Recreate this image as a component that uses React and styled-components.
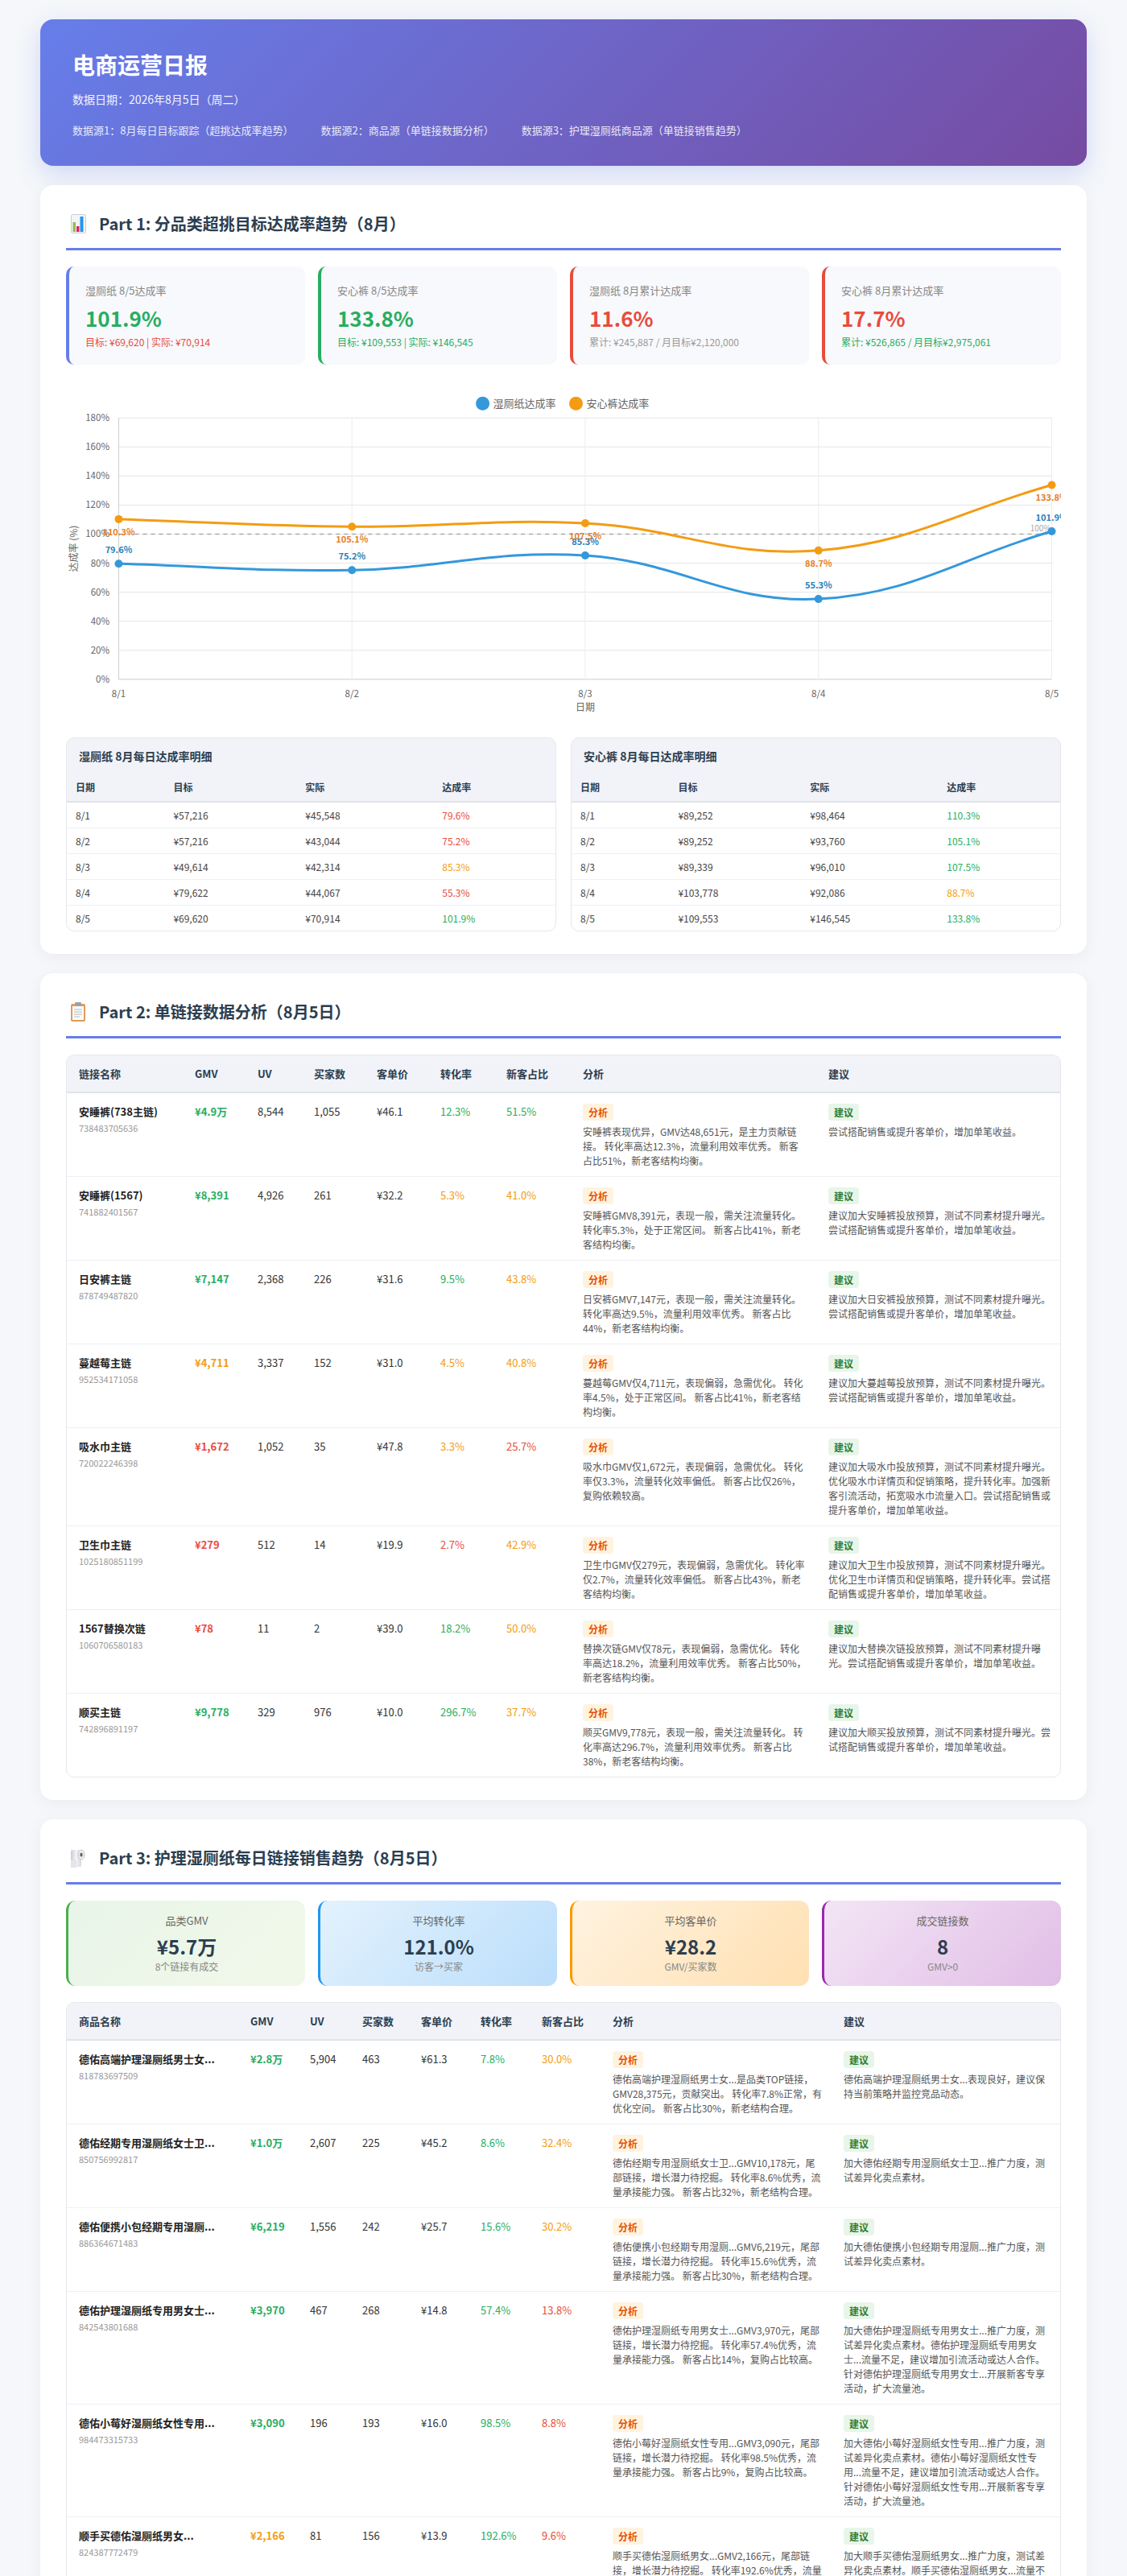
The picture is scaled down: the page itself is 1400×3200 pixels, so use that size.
import React from 'react';
import styled, { createGlobalStyle } from 'styled-components';

const GREEN = '#27ae60';
const ORANGE = '#f39c12';
const RED = '#e74c3c';
const tone = { g: GREEN, o: ORANGE, r: RED };

const GlobalStyle = createGlobalStyle`
  * { box-sizing: border-box; }
  body {
    margin: 0;
    background: #f5f7fa;
    color: #333;
    font-family: "Noto Sans CJK SC", "Noto Sans", sans-serif;
  }
`;

const Page = styled.div`
  max-width: 1300px;
  margin: 0 auto;
  padding: 24px 0 40px;
  display: flex;
  flex-direction: column;
  gap: 24px;
`;

const Header = styled.header`
  background: linear-gradient(135deg, #667eea 0%, #764ba2 100%);
  border-radius: 16px;
  padding: 36px 40px 34px;
  color: #fff;
  box-shadow: 0 10px 30px rgba(102, 126, 234, 0.25);
`;

const HeaderTitle = styled.h1`
  margin: 0;
  font-size: 28px;
  line-height: 40px;
  font-weight: 700;
`;

const HeaderDate = styled.div`
  margin-top: 12px;
  font-size: 14px;
  line-height: 22px;
  opacity: 0.92;
`;

const Sources = styled.div`
  margin-top: 18px;
  display: flex;
  gap: 34px;
  font-size: 13px;
  line-height: 20px;
  opacity: 0.85;
`;

const Section = styled.section`
  background: #fff;
  border-radius: 16px;
  padding: 32px 32px 28px;
  box-shadow: 0 4px 20px rgba(0, 0, 0, 0.05);
`;

const SectionTitle = styled.h2`
  margin: 0 0 20px;
  display: flex;
  align-items: center;
  font-size: 20px;
  line-height: 32px;
  font-weight: 700;
  color: #2c3e50;
  padding-bottom: 14px;
  border-bottom: 3px solid #667eea;

  svg {
    flex: none;
    margin-right: 15px;
  }
`;

/* ---------- part 1 ---------- */

const StatGrid = styled.div`
  display: grid;
  grid-template-columns: repeat(4, 1fr);
  gap: 16px;
`;

const StatCard = styled.div`
  background: #f8f9fc;
  border-left: 4px solid ${(p) => p.$accent};
  border-radius: 10px;
  padding: 20px;
`;

const StatLabel = styled.div`
  font-size: 13px;
  line-height: 20px;
  color: #888;
`;

const StatValue = styled.div`
  margin-top: 8px;
  font-size: 26px;
  line-height: 32px;
  font-weight: 700;
  color: ${(p) => p.$color};
`;

const StatSub = styled.div`
  margin-top: 6px;
  font-size: 12px;
  line-height: 16px;
  color: ${(p) => p.$color};
`;

const ChartBox = styled.div`
  margin-top: 29px;
  height: 405px;

  svg {
    display: block;
    width: 100%;
    height: 100%;
    font-family: "Noto Sans CJK SC", "Noto Sans", sans-serif;
  }
`;

const DetailGrid = styled.div`
  margin-top: 29px;
  display: grid;
  grid-template-columns: 1fr 1fr;
  gap: 18px;
`;

const DetailCard = styled.div`
  background: #f1f3f8;
  border: 1px solid #e6e8ee;
  border-radius: 10px;
  overflow: hidden;
`;

const DetailTitle = styled.div`
  padding: 14px 15px;
  font-size: 14px;
  line-height: 16px;
  font-weight: 700;
  color: #2c3e50;
`;

const Table = styled.table`
  width: 100%;
  border-collapse: collapse;
  table-layout: fixed;
`;

const Col = styled.col`
  width: ${(p) => p.$w};
`;

const DTh = styled.th`
  text-align: left;
  padding: 9px 11px;
  font-size: 12px;
  line-height: 16px;
  font-weight: 700;
  color: #2c3e50;
  border-bottom: 2px solid #e0e3ea;
`;

const DTd = styled.td`
  background: #fff;
  padding: 8px 11px;
  font-size: 12px;
  line-height: 15px;
  color: ${(p) => p.$color || '#444'};
  border-bottom: 1px solid #eef0f4;

  tr:last-child > & {
    border-bottom: none;
  }
`;

/* ---------- part 2 / 3 tables ---------- */

const DataCard = styled.div`
  border: 1px solid #e6e8ee;
  border-radius: 10px;
  overflow: hidden;
  margin-top: ${(p) => p.$top || 0}px;
`;

const Th = styled.th`
  background: #f1f3f8;
  text-align: left;
  padding: 12px 15px;
  font-size: 13px;
  line-height: 21px;
  font-weight: 700;
  color: #2c3e50;
  white-space: nowrap;
  border-bottom: 2px solid #e0e3ea;
`;

const Td = styled.td`
  padding: 13px ${(p) => (p.$wrap ? 12 : 15)}px 10px 15px;
  vertical-align: top;
  font-size: 13px;
  line-height: 20px;
  color: ${(p) => p.$color || '#333'};
  font-weight: ${(p) => (p.$bold ? 700 : 400)};
  white-space: ${(p) => (p.$wrap ? 'normal' : 'nowrap')};
  border-bottom: 1px solid #eef0f4;

  tr:last-child > & {
    border-bottom: none;
  }
`;

const LinkName = styled.div`
  font-weight: 700;
  color: #222;
`;

const LinkId = styled.div`
  margin-top: 2px;
  font-size: 11px;
  line-height: 16px;
  color: #999;
`;

const Badge = styled.span`
  display: block;
  width: fit-content;
  padding: 3px 7px;
  border-radius: 4px;
  font-size: 12px;
  line-height: 15px;
  font-weight: 700;
  color: ${(p) => (p.$kind === 'advice' ? '#2e7d32' : '#e65100')};
  background: ${(p) => (p.$kind === 'advice' ? '#e8f5e9' : '#fff3e0')};
`;

const Note = styled.div`
  margin-top: 5px;
  font-size: 12px;
  line-height: 18px;
  color: #555;
`;

/* ---------- part 3 summary ---------- */

const SummaryCard = styled.div`
  border-left: 3px solid ${(p) => p.$accent};
  background: linear-gradient(135deg, ${(p) => p.$from} 0%, ${(p) => p.$to} 100%);
  border-radius: 12px;
  padding: 16px;
  text-align: center;
`;

const SummaryLabel = styled.div`
  font-size: 13px;
  line-height: 18px;
  color: #666;
`;

const SummaryValue = styled.div`
  margin-top: 8px;
  font-size: 24px;
  line-height: 30px;
  font-weight: 700;
  color: #2c3e50;
`;

const SummarySub = styled.div`
  margin-top: 2px;
  font-size: 12px;
  line-height: 16px;
  color: #888;
`;

/* ---------- icons ---------- */

const BarsIcon = () => (
  <svg width="26" height="26" viewBox="0 0 26 26">
    <rect x="6.5" y="1.5" width="18" height="23" rx="2" fill="#f3f4f7" stroke="#c8ccd4" />
    <rect x="8.5" y="11" width="3.5" height="12" fill="#8bc34a" />
    <rect x="13" y="16" width="3.5" height="7" fill="#e91e63" />
    <rect x="17.5" y="4" width="4" height="19" fill="#2196f3" />
  </svg>
);

const ClipboardIcon = () => (
  <svg width="26" height="26" viewBox="0 0 26 26">
    <rect x="6" y="3" width="18" height="22" rx="2" fill="#e39a5b" />
    <rect x="8" y="6" width="14" height="17" fill="#fbfbfb" />
    <rect x="11" y="1" width="8" height="4.5" rx="1.2" fill="#9aa0a8" />
    <g stroke="#b5b9c0" strokeWidth="1">
      <line x1="10" y1="10" x2="20" y2="10" />
      <line x1="10" y1="13" x2="20" y2="13" />
      <line x1="10" y1="16" x2="20" y2="16" />
      <line x1="10" y1="19" x2="17" y2="19" />
    </g>
  </svg>
);

const RollIcon = () => (
  <svg width="26" height="26" viewBox="0 0 26 26">
    <defs>
      <linearGradient id="roll" x1="0" x2="1">
        <stop offset="0" stopColor="#c9cbd2" />
        <stop offset="0.5" stopColor="#f4f4f7" />
        <stop offset="1" stopColor="#d7d9df" />
      </linearGradient>
    </defs>
    <rect x="6" y="3" width="13" height="21" rx="2" fill="url(#roll)" />
    <rect x="6" y="16" width="7" height="9" fill="#e4e5ea" />
    <ellipse cx="19" cy="9" rx="4" ry="6" fill="#eceef2" stroke="#c2c5cc" />
    <ellipse cx="19" cy="9" rx="1.6" ry="2.6" fill="#6d5a5a" />
  </svg>
);

/* ---------- chart ---------- */

const CW = 1237;
const CH = 405;
const PL = 65.5;
const PR = 1225.5;
const PT = 37;
const PB = 362;
const chartDates = ['8/1', '8/2', '8/3', '8/4', '8/5'];
const wipesRate = [79.6, 75.2, 85.3, 55.3, 101.9];
const pantsRate = [110.3, 105.1, 107.5, 88.7, 133.8];
const px = (i) => PL + (i * (PR - PL)) / 4;
const py = (v) => PB - (v / 180) * (PB - PT);

function splinePath(vals) {
  const pts = vals.map((v, i) => ({ x: px(i), y: py(v) }));
  const t = 0.4;
  const cps = pts.map((p, i) => {
    const prev = pts[i - 1] || p;
    const next = pts[i + 1] || p;
    const d01 = Math.hypot(p.x - prev.x, p.y - prev.y);
    const d12 = Math.hypot(next.x - p.x, next.y - p.y);
    const s01 = d01 / (d01 + d12) || 0;
    const s12 = d12 / (d01 + d12) || 0;
    const fa = t * s01;
    const fb = t * s12;
    return {
      prev: { x: p.x - fa * (next.x - prev.x), y: p.y - fa * (next.y - prev.y) },
      next: { x: p.x + fb * (next.x - prev.x), y: p.y + fb * (next.y - prev.y) },
    };
  });
  let d = `M${pts[0].x},${pts[0].y}`;
  for (let i = 1; i < pts.length; i++) {
    d += ` C${cps[i - 1].next.x},${cps[i - 1].next.y} ${cps[i].prev.x},${cps[i].prev.y} ${pts[i].x},${pts[i].y}`;
  }
  return d;
}

const RateChart = () => {
  const ticks = [0, 20, 40, 60, 80, 100, 120, 140, 160, 180];
  return (
    <ChartBox>
      <svg viewBox={`0 0 ${CW} ${CH}`}>
        {/* legend */}
        <circle cx="518" cy="19" r="8.5" fill="#3498db" />
        <text x="531" y="23.5" fontSize="13" fill="#666">湿厕纸达成率</text>
        <circle cx="634" cy="19" r="8.5" fill="#f39c12" />
        <text x="647" y="23.5" fontSize="13" fill="#666">安心裤达成率</text>

        {/* grid */}
        {ticks.map((v) => (
          <g key={v}>
            <line x1={PL} x2={PR} y1={py(v)} y2={py(v)} stroke={v === 0 ? '#ccc' : '#e5e5e5'} strokeWidth="1" />
            <text x="54" y={py(v) + 4} fontSize="11.5" fill="#666" textAnchor="end">{v}%</text>
          </g>
        ))}
        {chartDates.map((d, i) => (
          <g key={d}>
            <line x1={px(i)} x2={px(i)} y1={PT} y2={PB} stroke={i === 0 ? '#ccc' : '#ececec'} strokeWidth="1" />
            <text x={px(i)} y="384" fontSize="11.5" fill="#666" textAnchor="middle">{d}</text>
          </g>
        ))}
        <text x={(PL + PR) / 2} y="401" fontSize="12" fill="#666" textAnchor="middle">日期</text>
        <text
          x="0"
          y="0"
          fontSize="12"
          fill="#666"
          textAnchor="middle"
          transform={`translate(14 ${(PT + PB) / 2}) rotate(-90)`}
        >
          达成率 (%)
        </text>

        {/* 100% target */}
        <line x1={PL} x2={PR} y1={py(100)} y2={py(100)} stroke="#aaa" strokeWidth="1.5" strokeDasharray="5 5" />
        <text x={PR - 1} y={py(100) - 3} fontSize="10" fill="#aaa" textAnchor="end">100%</text>

        {/* lines */}
        <path d={splinePath(pantsRate)} fill="none" stroke="#f39c12" strokeWidth="3" />
        <path d={splinePath(wipesRate)} fill="none" stroke="#3498db" strokeWidth="3" />
        {pantsRate.map((v, i) => (
          <g key={`p${i}`}>
            <circle cx={px(i)} cy={py(v)} r="5" fill="#f39c12" />
            <text x={px(i)} y={py(v) + 20} fontSize="11" fontWeight="700" fill="#e67e22" textAnchor="middle">{v}%</text>
          </g>
        ))}
        {wipesRate.map((v, i) => (
          <g key={`w${i}`}>
            <circle cx={px(i)} cy={py(v)} r="5" fill="#3498db" />
            <text x={px(i)} y={py(v) - 13} fontSize="11" fontWeight="700" fill="#2980b9" textAnchor="middle">{v}%</text>
          </g>
        ))}
      </svg>
    </ChartBox>
  );
};

/* ---------- data ---------- */

const stats = [
  { label: '湿厕纸 8/5达成率', value: '101.9%', valueColor: GREEN, accent: '#667eea', sub: '目标: ¥69,620 | 实际: ¥70,914', subColor: RED },
  { label: '安心裤 8/5达成率', value: '133.8%', valueColor: GREEN, accent: GREEN, sub: '目标: ¥109,553 | 实际: ¥146,545', subColor: GREEN },
  { label: '湿厕纸 8月累计达成率', value: '11.6%', valueColor: RED, accent: RED, sub: '累计: ¥245,887 / 月目标¥2,120,000', subColor: '#999' },
  { label: '安心裤 8月累计达成率', value: '17.7%', valueColor: RED, accent: RED, sub: '累计: ¥526,865 / 月目标¥2,975,061', subColor: GREEN },
];

const detailTables = [
  {
    title: '湿厕纸 8月每日达成率明细',
    rows: [
      ['8/1', '¥57,216', '¥45,548', '79.6%', 'r'],
      ['8/2', '¥57,216', '¥43,044', '75.2%', 'r'],
      ['8/3', '¥49,614', '¥42,314', '85.3%', 'o'],
      ['8/4', '¥79,622', '¥44,067', '55.3%', 'r'],
      ['8/5', '¥69,620', '¥70,914', '101.9%', 'g'],
    ],
  },
  {
    title: '安心裤 8月每日达成率明细',
    rows: [
      ['8/1', '¥89,252', '¥98,464', '110.3%', 'g'],
      ['8/2', '¥89,252', '¥93,760', '105.1%', 'g'],
      ['8/3', '¥89,339', '¥96,010', '107.5%', 'g'],
      ['8/4', '¥103,778', '¥92,086', '88.7%', 'o'],
      ['8/5', '¥109,553', '¥146,545', '133.8%', 'g'],
    ],
  },
];

const linkCols = [144, 78, 70, 78, 79, 82, 95, 305, 306];
const productCols = [213, 74, 65, 73, 74, 76, 88, 287, 287];

const linkRows = [
  {
    name: '安睡裤(738主链)', id: '738483705636', gmv: ['¥4.9万', 'g'], uv: '8,544', buyers: '1,055', aov: '¥46.1', cvr: ['12.3%', 'g'], nr: ['51.5%', 'g'],
    analysis: '安睡裤表现优异，GMV达48,651元，是主力贡献链接。 转化率高达12.3%，流量利用效率优秀。 新客占比51%，新老客结构均衡。',
    advice: '尝试搭配销售或提升客单价，增加单笔收益。',
  },
  {
    name: '安睡裤(1567)', id: '741882401567', gmv: ['¥8,391', 'g'], uv: '4,926', buyers: '261', aov: '¥32.2', cvr: ['5.3%', 'o'], nr: ['41.0%', 'o'],
    analysis: '安睡裤GMV8,391元，表现一般，需关注流量转化。 转化率5.3%，处于正常区间。 新客占比41%，新老客结构均衡。',
    advice: '建议加大安睡裤投放预算，测试不同素材提升曝光。尝试搭配销售或提升客单价，增加单笔收益。',
  },
  {
    name: '日安裤主链', id: '878749487820', gmv: ['¥7,147', 'g'], uv: '2,368', buyers: '226', aov: '¥31.6', cvr: ['9.5%', 'g'], nr: ['43.8%', 'o'],
    analysis: '日安裤GMV7,147元，表现一般，需关注流量转化。 转化率高达9.5%，流量利用效率优秀。 新客占比44%，新老客结构均衡。',
    advice: '建议加大日安裤投放预算，测试不同素材提升曝光。尝试搭配销售或提升客单价，增加单笔收益。',
  },
  {
    name: '蔓越莓主链', id: '952534171058', gmv: ['¥4,711', 'o'], uv: '3,337', buyers: '152', aov: '¥31.0', cvr: ['4.5%', 'o'], nr: ['40.8%', 'o'],
    analysis: '蔓越莓GMV仅4,711元，表现偏弱，急需优化。 转化率4.5%，处于正常区间。 新客占比41%，新老客结构均衡。',
    advice: '建议加大蔓越莓投放预算，测试不同素材提升曝光。尝试搭配销售或提升客单价，增加单笔收益。',
  },
  {
    name: '吸水巾主链', id: '720022246398', gmv: ['¥1,672', 'r'], uv: '1,052', buyers: '35', aov: '¥47.8', cvr: ['3.3%', 'o'], nr: ['25.7%', 'r'],
    analysis: '吸水巾GMV仅1,672元，表现偏弱，急需优化。 转化率仅3.3%，流量转化效率偏低。 新客占比仅26%，复购依赖较高。',
    advice: '建议加大吸水巾投放预算，测试不同素材提升曝光。优化吸水巾详情页和促销策略，提升转化率。加强新客引流活动，拓宽吸水巾流量入口。尝试搭配销售或提升客单价，增加单笔收益。',
  },
  {
    name: '卫生巾主链', id: '1025180851199', gmv: ['¥279', 'r'], uv: '512', buyers: '14', aov: '¥19.9', cvr: ['2.7%', 'r'], nr: ['42.9%', 'o'],
    analysis: '卫生巾GMV仅279元，表现偏弱，急需优化。 转化率仅2.7%，流量转化效率偏低。 新客占比43%，新老客结构均衡。',
    advice: '建议加大卫生巾投放预算，测试不同素材提升曝光。优化卫生巾详情页和促销策略，提升转化率。尝试搭配销售或提升客单价，增加单笔收益。',
  },
  {
    name: '1567替换次链', id: '1060706580183', gmv: ['¥78', 'r'], uv: '11', buyers: '2', aov: '¥39.0', cvr: ['18.2%', 'g'], nr: ['50.0%', 'o'],
    analysis: '替换次链GMV仅78元，表现偏弱，急需优化。 转化率高达18.2%，流量利用效率优秀。 新客占比50%，新老客结构均衡。',
    advice: '建议加大替换次链投放预算，测试不同素材提升曝光。尝试搭配销售或提升客单价，增加单笔收益。',
  },
  {
    name: '顺买主链', id: '742896891197', gmv: ['¥9,778', 'g'], uv: '329', buyers: '976', aov: '¥10.0', cvr: ['296.7%', 'g'], nr: ['37.7%', 'o'],
    analysis: '顺买GMV9,778元，表现一般，需关注流量转化。 转化率高达296.7%，流量利用效率优秀。 新客占比38%，新老客结构均衡。',
    advice: '建议加大顺买投放预算，测试不同素材提升曝光。尝试搭配销售或提升客单价，增加单笔收益。',
  },
];

const tailAdvice = (n) =>
  `加大${n}推广力度，测试差异化卖点素材。${n}流量不足，建议增加引流活动或达人合作。针对${n}开展新客专享活动，扩大流量池。`;

const productRows = [
  {
    name: '德佑高端护理湿厕纸男士女...', id: '818783697509', gmv: ['¥2.8万', 'g'], uv: '5,904', buyers: '463', aov: '¥61.3', cvr: ['7.8%', 'g'], nr: ['30.0%', 'o'],
    analysis: '德佑高端护理湿厕纸男士女...是品类TOP链接，GMV28,375元，贡献突出。 转化率7.8%正常，有优化空间。 新客占比30%，新老结构合理。',
    advice: '德佑高端护理湿厕纸男士女...表现良好，建议保持当前策略并监控竞品动态。',
  },
  {
    name: '德佑经期专用湿厕纸女士卫...', id: '850756992817', gmv: ['¥1.0万', 'g'], uv: '2,607', buyers: '225', aov: '¥45.2', cvr: ['8.6%', 'g'], nr: ['32.4%', 'o'],
    analysis: '德佑经期专用湿厕纸女士卫...GMV10,178元，尾部链接，增长潜力待挖掘。 转化率8.6%优秀，流量承接能力强。 新客占比32%，新老结构合理。',
    advice: '加大德佑经期专用湿厕纸女士卫...推广力度，测试差异化卖点素材。',
  },
  {
    name: '德佑便携小包经期专用湿厕...', id: '886364671483', gmv: ['¥6,219', 'g'], uv: '1,556', buyers: '242', aov: '¥25.7', cvr: ['15.6%', 'g'], nr: ['30.2%', 'o'],
    analysis: '德佑便携小包经期专用湿厕...GMV6,219元，尾部链接，增长潜力待挖掘。 转化率15.6%优秀，流量承接能力强。 新客占比30%，新老结构合理。',
    advice: '加大德佑便携小包经期专用湿厕...推广力度，测试差异化卖点素材。',
  },
  {
    name: '德佑护理湿厕纸专用男女士...', id: '842543801688', gmv: ['¥3,970', 'g'], uv: '467', buyers: '268', aov: '¥14.8', cvr: ['57.4%', 'g'], nr: ['13.8%', 'r'],
    analysis: '德佑护理湿厕纸专用男女士...GMV3,970元，尾部链接，增长潜力待挖掘。 转化率57.4%优秀，流量承接能力强。 新客占比14%，复购占比较高。',
    advice: tailAdvice('德佑护理湿厕纸专用男女士...'),
  },
  {
    name: '德佑小莓好湿厕纸女性专用...', id: '984473315733', gmv: ['¥3,090', 'g'], uv: '196', buyers: '193', aov: '¥16.0', cvr: ['98.5%', 'g'], nr: ['8.8%', 'r'],
    analysis: '德佑小莓好湿厕纸女性专用...GMV3,090元，尾部链接，增长潜力待挖掘。 转化率98.5%优秀，流量承接能力强。 新客占比9%，复购占比较高。',
    advice: tailAdvice('德佑小莓好湿厕纸女性专用...'),
  },
  {
    name: '顺手买德佑湿厕纸男女...', id: '824387772479', gmv: ['¥2,166', 'o'], uv: '81', buyers: '156', aov: '¥13.9', cvr: ['192.6%', 'g'], nr: ['9.6%', 'r'],
    analysis: '顺手买德佑湿厕纸男女...GMV2,166元，尾部链接，增长潜力待挖掘。 转化率192.6%优秀，流量承接能力强。 新客占比10%，复购占比较高。',
    advice: tailAdvice('顺手买德佑湿厕纸男女...'),
  },
];

const summary = [
  { label: '品类GMV', value: '¥5.7万', sub: '8个链接有成交', accent: '#4caf50', from: '#e8f5e9', to: '#f1f8e9' },
  { label: '平均转化率', value: '121.0%', sub: '访客→买家', accent: '#2196f3', from: '#e3f2fd', to: '#bbdefb' },
  { label: '平均客单价', value: '¥28.2', sub: 'GMV/买家数', accent: '#ff9800', from: '#fff3e0', to: '#ffe0b2' },
  { label: '成交链接数', value: '8', sub: 'GMV>0', accent: '#9c27b0', from: '#f3e5f5', to: '#e1bee7' },
];

/* ---------- composed parts ---------- */

const DataTable = ({ firstLabel, widths, rows, top }) => (
  <DataCard $top={top}>
    <Table>
      <colgroup>
        {widths.map((w, i) => (
          <Col key={i} $w={`${w}px`} />
        ))}
      </colgroup>
      <thead>
        <tr>
          {[firstLabel, 'GMV', 'UV', '买家数', '客单价', '转化率', '新客占比', '分析', '建议'].map((h) => (
            <Th key={h}>{h}</Th>
          ))}
        </tr>
      </thead>
      <tbody>
        {rows.map((r) => (
          <tr key={r.id}>
            <Td>
              <LinkName>{r.name}</LinkName>
              <LinkId>{r.id}</LinkId>
            </Td>
            <Td $bold $color={tone[r.gmv[1]]}>{r.gmv[0]}</Td>
            <Td>{r.uv}</Td>
            <Td>{r.buyers}</Td>
            <Td>{r.aov}</Td>
            <Td $color={tone[r.cvr[1]]}>{r.cvr[0]}</Td>
            <Td $color={tone[r.nr[1]]}>{r.nr[0]}</Td>
            <Td $wrap>
              <Badge>分析</Badge>
              <Note>{r.analysis}</Note>
            </Td>
            <Td $wrap>
              <Badge $kind="advice">建议</Badge>
              <Note>{r.advice}</Note>
            </Td>
          </tr>
        ))}
      </tbody>
    </Table>
  </DataCard>
);

const DetailTable = ({ title, rows }) => (
  <DetailCard>
    <DetailTitle>{title}</DetailTitle>
    <Table>
      <colgroup>
        <Col $w="20%" />
        <Col $w="27%" />
        <Col $w="28%" />
        <Col $w="25%" />
      </colgroup>
      <thead>
        <tr>
          <DTh>日期</DTh>
          <DTh>目标</DTh>
          <DTh>实际</DTh>
          <DTh>达成率</DTh>
        </tr>
      </thead>
      <tbody>
        {rows.map((r) => (
          <tr key={r[0]}>
            <DTd>{r[0]}</DTd>
            <DTd>{r[1]}</DTd>
            <DTd>{r[2]}</DTd>
            <DTd $color={tone[r[4]]}>{r[3]}</DTd>
          </tr>
        ))}
      </tbody>
    </Table>
  </DetailCard>
);

export default function App() {
  return (
    <>
      <GlobalStyle />
      <Page>
        <Header>
          <HeaderTitle>电商运营日报</HeaderTitle>
          <HeaderDate>数据日期：2026年8月5日（周二）</HeaderDate>
          <Sources>
            <span>数据源1：8月每日目标跟踪（超挑达成率趋势）</span>
            <span>数据源2：商品源（单链接数据分析）</span>
            <span>数据源3：护理湿厕纸商品源（单链接销售趋势）</span>
          </Sources>
        </Header>

        <Section>
          <SectionTitle>
            <BarsIcon />
            Part 1: 分品类超挑目标达成率趋势（8月）
          </SectionTitle>
          <StatGrid>
            {stats.map((s) => (
              <StatCard key={s.label} $accent={s.accent}>
                <StatLabel>{s.label}</StatLabel>
                <StatValue $color={s.valueColor}>{s.value}</StatValue>
                <StatSub $color={s.subColor}>{s.sub}</StatSub>
              </StatCard>
            ))}
          </StatGrid>
          <RateChart />
          <DetailGrid>
            {detailTables.map((t) => (
              <DetailTable key={t.title} title={t.title} rows={t.rows} />
            ))}
          </DetailGrid>
        </Section>

        <Section>
          <SectionTitle>
            <ClipboardIcon />
            Part 2: 单链接数据分析（8月5日）
          </SectionTitle>
          <DataTable firstLabel="链接名称" widths={linkCols} rows={linkRows} />
        </Section>

        <Section>
          <SectionTitle>
            <RollIcon />
            Part 3: 护理湿厕纸每日链接销售趋势（8月5日）
          </SectionTitle>
          <StatGrid>
            {summary.map((s) => (
              <SummaryCard key={s.label} $accent={s.accent} $from={s.from} $to={s.to}>
                <SummaryLabel>{s.label}</SummaryLabel>
                <SummaryValue>{s.value}</SummaryValue>
                <SummarySub>{s.sub}</SummarySub>
              </SummaryCard>
            ))}
          </StatGrid>
          <DataTable firstLabel="商品名称" widths={productCols} rows={productRows} top={20} />
        </Section>
      </Page>
    </>
  );
}
